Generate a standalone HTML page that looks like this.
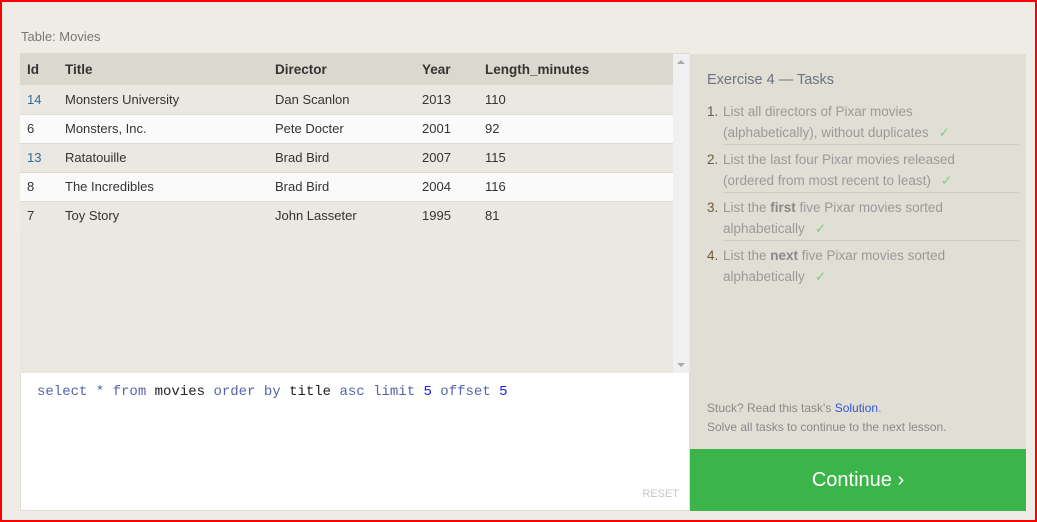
<!DOCTYPE html>
<html><head><style>
*{margin:0;padding:0;box-sizing:border-box}
body{width:1037px;height:522px;overflow:hidden;background:#efece5;font-family:"Liberation Sans",sans-serif;position:relative}
.frame{position:absolute;left:0;top:0;width:1037px;height:522px;border:2px solid #f00;z-index:10;pointer-events:none}
.lbl{position:absolute;left:21px;top:29px;font-size:13px;color:#777}
.left{position:absolute;left:20px;top:53px;width:670px;height:320px;background:#e9e7e0;border-top:1px solid #dcdad3}
.sb{position:absolute;left:673px;top:54px;width:16px;height:319px;background:#f0f0f0}
table{position:absolute;left:20px;top:54px;width:653px;border-collapse:collapse;font-size:13px;color:#333}
th{height:31px;background:#dbd9cf;text-align:left;font-weight:bold;font-size:13.5px;color:#333;padding:0}
td{height:29px;border-bottom:1px solid #dddbd4;padding:0}
tr.w td{background:#fafafa}
tr.g td{background:#eae8e1}
.c1{padding-left:7px;width:45px}
.c2{width:210px}.c3{width:147px}.c4{width:63px}
.blue{color:#2d6aa0}
.editor{position:absolute;left:20px;top:373px;width:670px;height:138px;background:#fff;border:1px solid #e0ded8;border-top:none}
.code{position:absolute;left:16px;top:11px;font-family:"Liberation Mono",monospace;font-size:14px;color:#5563a8}
.code b{font-weight:normal;color:#222}.code i{font-style:normal;color:#1a1ae0}
.reset{position:absolute;right:10px;bottom:10px;font-size:11px;color:#c8c8c8}
.right{position:absolute;left:690px;top:54px;width:336px;height:395px;background:#e1dfd5}
.rh{position:absolute;left:17px;top:18px;font-size:14.5px;color:#6b7380}
ol{position:absolute;left:17px;top:48px;width:312px;list-style:none}
li{position:relative;padding-left:16px;font-size:13.5px;color:#999;line-height:20.5px;margin-bottom:5px}
li .n{position:absolute;left:0;color:#6c5a3c}
li .t{display:block;border-bottom:1px solid #cfcdc5;padding-bottom:1px}
li:last-child .t{border:none}
li b{color:#888}
.ck{color:#7fcc8a;margin-left:10px}
.stuck{position:absolute;left:17px;top:345px;font-size:12px;color:#888;line-height:18.5px}
.stuck a{color:#3355cc}
.cont{position:absolute;left:690px;top:449px;width:336px;height:62px;background:#3bb54a;color:#fff;font-size:20px;text-align:center;line-height:62px}
</style></head><body>
<div class="frame"></div>
<div class="lbl">Table: Movies</div>
<div class="left"></div>
<div class="sb"><div style="position:absolute;left:4px;top:6px;border:4px solid transparent;border-bottom-color:#aaa;border-top:none;width:0"></div><div style="position:absolute;left:4px;bottom:6px;border:4px solid transparent;border-top-color:#aaa;border-bottom:none;width:0"></div></div>
<table>
<tr><th class="c1">Id</th><th class="c2">Title</th><th class="c3">Director</th><th class="c4">Year</th><th>Length_minutes</th></tr>
<tr class="g"><td class="c1 blue">14</td><td>Monsters University</td><td>Dan Scanlon</td><td>2013</td><td>110</td></tr>
<tr class="w"><td class="c1">6</td><td>Monsters, Inc.</td><td>Pete Docter</td><td>2001</td><td>92</td></tr>
<tr class="g"><td class="c1 blue">13</td><td>Ratatouille</td><td>Brad Bird</td><td>2007</td><td>115</td></tr>
<tr class="w"><td class="c1">8</td><td>The Incredibles</td><td>Brad Bird</td><td>2004</td><td>116</td></tr>
<tr class="g"><td class="c1" style="border:none">7</td><td style="border:none">Toy Story</td><td style="border:none">John Lasseter</td><td style="border:none">1995</td><td style="border:none">81</td></tr>
</table>
<div class="editor"><div class="code">select * from <b>movies</b> order by <b>title</b> asc limit <i>5</i> offset <i>5</i></div><div class="reset">RESET</div></div>
<div class="right">
<div class="rh">Exercise 4 — Tasks</div>
<ol>
<li><span class="n">1.</span><span class="t">List all directors of Pixar movies<br>(alphabetically), without duplicates<span class="ck">✓</span></span></li>
<li><span class="n">2.</span><span class="t">List the last four Pixar movies released<br>(ordered from most recent to least)<span class="ck">✓</span></span></li>
<li><span class="n">3.</span><span class="t">List the <b>first</b> five Pixar movies sorted<br>alphabetically<span class="ck">✓</span></span></li>
<li><span class="n">4.</span><span class="t">List the <b>next</b> five Pixar movies sorted<br>alphabetically<span class="ck">✓</span></span></li>
</ol>
<div class="stuck">Stuck? Read this task's <a>Solution</a>.<br>Solve all tasks to continue to the next lesson.</div>
</div>
<div class="cont">Continue ›</div>
</body></html>
